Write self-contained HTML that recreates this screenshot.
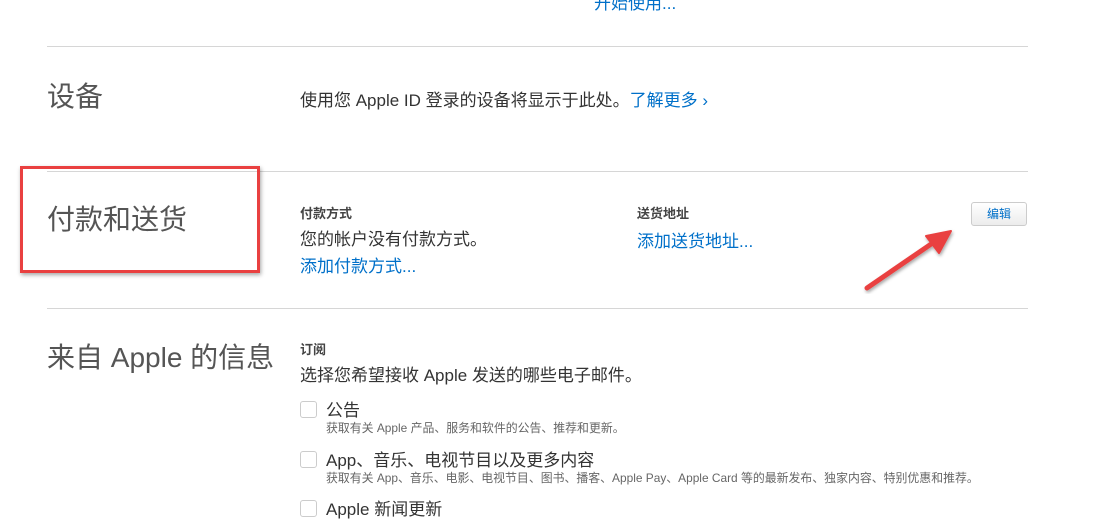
<!DOCTYPE html>
<html><head><meta charset="utf-8"><style>
body{margin:0;width:1113px;height:517px;overflow:hidden;background:#fff;font-family:"Liberation Sans","Noto Sans CJK SC",sans-serif;color:#333;position:relative}
.a{position:absolute;white-space:nowrap}
.hr{position:absolute;left:47px;width:981px;height:1px;background:#d6d6d6}
.h{font-size:28px;color:#555}
.t{font-size:17px;color:#333}
.l{color:#0070c9}
.lab{font-size:13px;font-weight:bold;color:#444}
.s{font-size:11.9px;color:#666}
.cb{position:absolute;left:300px;width:15px;height:15px;border:1px solid #ccc;border-radius:3px;background:#fff}
</style></head><body>
<div class="a t l" style="left:594px;top:-11px">开始使用...</div>
<div class="hr" style="top:46px"></div>
<div class="a h" style="left:47px;top:75px">设备</div>
<div class="a t" style="left:300px;top:86px">使用您 Apple ID 登录的设备将显示于此处。<span class="l">了解更多 ›</span></div>
<div class="hr" style="top:171px"></div>
<div class="a h" style="left:47px;top:198px">付款和送货</div>
<div style="position:absolute;left:20px;top:166px;width:234px;height:101px;border:3px solid #e94040;box-shadow:1px 2px 4px rgba(0,0,0,.35)"></div>
<div class="a lab" style="left:300px;top:203px">付款方式</div>
<div class="a t" style="left:300px;top:225px">您的帐户没有付款方式。</div>
<div class="a t l" style="left:300px;top:252px">添加付款方式...</div>
<div class="a lab" style="left:637px;top:203px">送货地址</div>
<div class="a t l" style="left:637px;top:227px">添加送货地址...</div>
<div style="position:absolute;left:971px;top:202px;width:54px;height:22px;border:1px solid #ccc;border-radius:3px;background:linear-gradient(#fff,#ececec);font-size:12px;color:#0070c9;text-align:center;line-height:22px">编辑</div>
<svg style="position:absolute;left:0;top:0" width="1113" height="517"><defs><filter id="f"><feDropShadow dx="1" dy="2" stdDeviation="1.5" flood-opacity=".35"/></filter></defs><g filter="url(#f)" fill="#e94040" stroke="#e94040"><line x1="867" y1="288" x2="937" y2="240" stroke-width="5" stroke-linecap="round"/><polygon points="951,231 926,236 939,253" stroke-width="2" stroke-linejoin="round"/></g></svg>
<div class="hr" style="top:308px"></div>
<div class="a h" style="left:47px;top:336px">来自 Apple 的信息</div>
<div class="a lab" style="left:300px;top:339px">订阅</div>
<div class="a t" style="left:300px;top:361px">选择您希望接收 Apple 发送的哪些电子邮件。</div>
<div class="cb" style="top:401px"></div>
<div class="a t" style="left:326px;top:396px">公告</div>
<div class="a s" style="left:326px;top:419px">获取有关 Apple 产品、服务和软件的公告、推荐和更新。</div>
<div class="cb" style="top:451px"></div>
<div class="a t" style="left:326px;top:446px">App、音乐、电视节目以及更多内容</div>
<div class="a s" style="left:326px;top:469px">获取有关 App、音乐、电影、电视节目、图书、播客、Apple Pay、Apple Card 等的最新发布、独家内容、特别优惠和推荐。</div>
<div class="cb" style="top:500px"></div>
<div class="a t" style="left:326px;top:495px">Apple 新闻更新</div>
</body></html>
